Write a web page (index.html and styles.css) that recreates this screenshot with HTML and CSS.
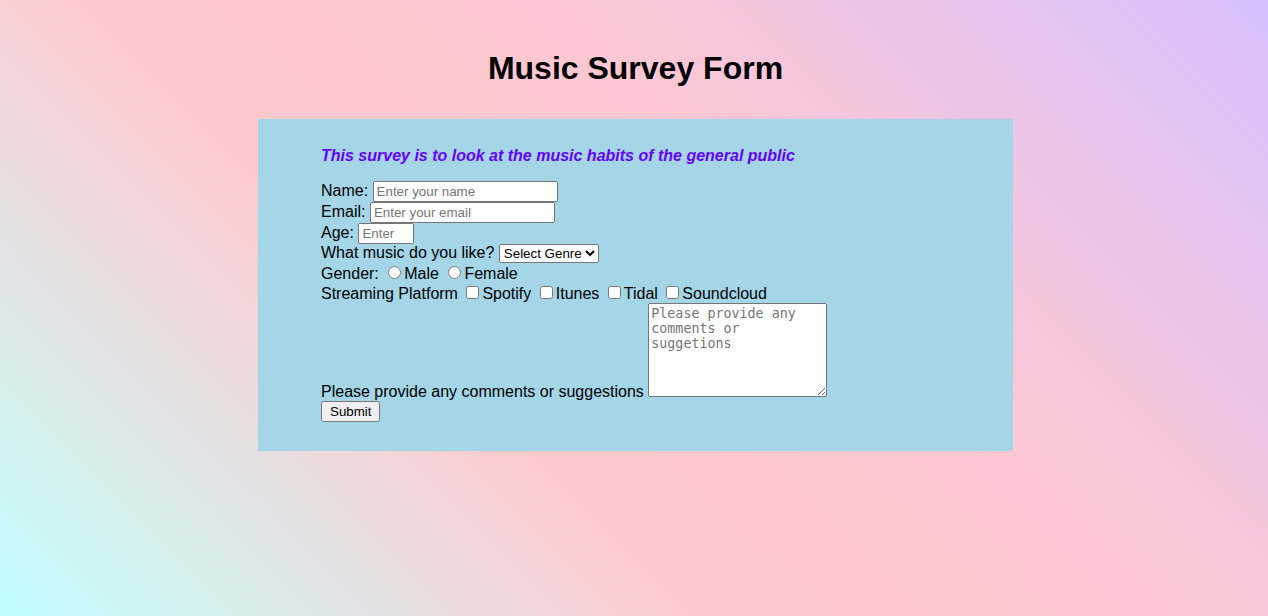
FILE: index.html
```html
<!DOCTYPE html>
<html lang="en">
<head>
<meta charset="utf-8">
<title>Music Survey Form</title>
<link rel="stylesheet" href="styles.css">
</head>
<body>
<h1 class="title">Music Survey Form</h1>
<div class="survey">
  <p class="intro">This survey is to look at the music habits of the general public</p>
  <form class="survey-form">
    <label for="name">Name:</label> <input id="name" class="field field-wide" type="text" placeholder="Enter your name"><br>
    <label for="email">Email:</label> <input id="email" class="field field-wide" type="email" placeholder="Enter your email"><br>
    <label for="age">Age:</label> <input id="age" class="field field-age" type="text" placeholder="Enter"><br>
    <label for="genre">What music do you like?</label> <select id="genre" class="genre">
      <option>Select Genre</option>
      <option>Pop</option>
      <option>Rock</option>
      <option>Jazz</option>
    </select><br>
    Gender: <input class="radio" type="radio" name="gender" id="male"><label for="male">Male</label> <input class="radio" type="radio" name="gender" id="female"><label for="female">Female</label><br>
    Streaming Platform <input class="check" type="checkbox" id="spotify"><label for="spotify">Spotify</label> <input class="check" type="checkbox" id="itunes"><label for="itunes">Itunes</label> <input class="check" type="checkbox" id="tidal"><label for="tidal">Tidal</label> <input class="check" type="checkbox" id="soundcloud"><label for="soundcloud">Soundcloud</label><br>
    <label for="comments">Please provide any comments or suggestions</label> <textarea id="comments" class="comments" placeholder="Please provide any comments or suggetions"></textarea><br>
    <input class="submit" type="submit" value="Submit">
  </form>
</div>
</body>
</html>
```

FILE: styles.css
```css
html {
  min-height: 100%;
  background: linear-gradient(45deg, #c0fffe 0%, #ffcacd 37%, #ffc8d2 62%, #d6c0ff 100%);
}

body {
  margin: 0;
  min-height: 616px;
  font-family: "Liberation Sans", Arial, sans-serif;
  font-size: 16px;
  color: #000;
}

.title {
  margin: 50px 0 32px;
  padding-left: 3px;
  font-size: 32px;
  font-weight: bold;
  text-align: center;
}

.survey {
  box-sizing: border-box;
  width: 755px;
  margin-left: 258px;
  padding: 28px 0 29px 63px;
  background: #a4d6e7;
}

.intro {
  margin: 0 0 16px;
  color: #6600ff;
  font-weight: bold;
  font-style: italic;
}

.survey-form {
  margin: 0;
}

.field,
.genre,
.submit {
  font-family: "Liberation Sans", Arial, sans-serif;
  font-size: 13.333px;
}

.field {
  box-sizing: border-box;
}

.field-wide {
  width: 185px;
}

.field-age {
  width: 56px;
}

.genre {
  width: 100px;
}

.submit {
  padding: 1px 7px;
}

.comments {
  box-sizing: border-box;
  width: 179px;
  height: 94px;
  font-family: "DejaVu Sans Mono", monospace;
  font-size: 13.333px;
}
```
